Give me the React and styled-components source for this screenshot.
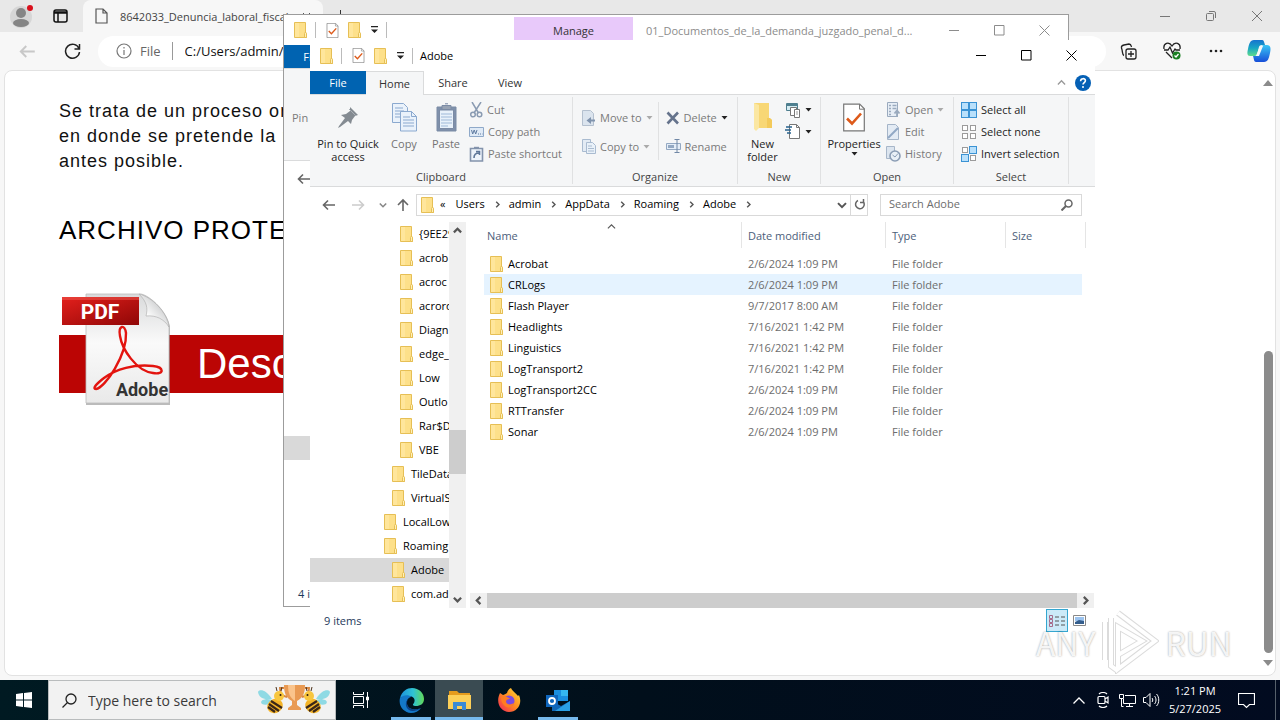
import React from "react";
import styled, { createGlobalStyle, css } from "styled-components";

const GlobalStyle = createGlobalStyle`
  * {
    box-sizing: border-box;
  }
  body {
    margin: 0;
    font-family: "Open Sans", "Noto Sans", sans-serif;
    font-size: 11px;
    color: #1e1e1e;
  }
  button, input {
    font: inherit;
    color: inherit;
    margin: 0;
    padding: 0;
    border: 0;
    background: none;
  }
  svg {
    display: block;
    flex: none;
  }
`;

const Desktop = styled.div`
  position: relative;
  display: flex;
  flex-direction: column;
  height: 100vh;
  min-height: 600px;
  overflow: hidden;
  background: #f7f7f7;
`;

/* ---------- browser ---------- */

const Browser = styled.main`
  flex: 1;
  display: flex;
  flex-direction: column;
  min-height: 0;
`;

const TabStrip = styled.div`
  display: flex;
  align-items: stretch;
  height: 32px;
  background: #e8e8e8;
`;

const StripButton = styled.button`
  width: ${(p) => p.$width || 46}px;
  display: flex;
  align-items: center;
  justify-content: center;
`;

const BrowserTab = styled.div`
  display: flex;
  align-items: center;
  gap: 12px;
  width: 240px;
  margin-left: 6px;
  padding: 0 12px;
  border-radius: 8px 8px 0 0;
  background: #f7f7f7;
  color: #444;
`;

const TabTitle = styled.span`
  flex: 1;
  overflow: hidden;
  white-space: nowrap;
`;

const Spacer = styled.div`
  flex: 1;
`;

const Toolbar = styled.div`
  display: flex;
  align-items: center;
  height: 38px;
  padding-left: 4px;
`;

const UrlBar = styled.label`
  flex: 1;
  display: flex;
  align-items: center;
  height: 31px;
  margin-left: 4px;
  padding-left: 18px;
  border-radius: 16px;
  background: #fff;
  color: #666;
  font-size: 13px;

  input {
    flex: 1;
    margin-left: 11px;
    padding-left: 12px;
    border-left: 1px solid #999;
    color: #111;
    outline: none;
  }
  svg {
    margin-right: 8px;
  }
`;

const Page = styled.section`
  flex: 1;
  display: flex;
  min-height: 0;
  margin: 0 4px 4px;
  border: 1px solid #e2e2e2;
  border-radius: 8px;
  background: #fff;
`;

const PageBody = styled.article`
  flex: 1;
  padding: 28px 0 0 54px;
  overflow: hidden;
  font-family: "Liberation Sans", Arial, sans-serif;
  color: #111;

  p {
    margin: 0;
    font-size: 18px;
    line-height: 25px;
    letter-spacing: 1px;
  }
  h2 {
    margin: 41px 0 90px;
    font-size: 26px;
    font-weight: 400;
    line-height: 30px;
    letter-spacing: 1px;
    color: #000;
  }
`;

const Banner = styled.a`
  position: relative;
  display: block;
  width: 440px;
  padding-left: 138px;
  background: #bb0504;
  color: #fff;
  font-size: 42px;
  line-height: 58px;
  text-decoration: none;

  svg {
    position: absolute;
    left: 0;
    bottom: -15px;
  }
`;

const PageScroll = styled.div`
  display: flex;
  flex-direction: column;
  align-items: center;
  width: 14px;
  padding: 9px 0;
`;

const PageThumb = styled.div`
  flex: 301;
  width: 9px;
  margin-bottom: 7px;
  border-radius: 5px;
  background: #8b8b8b;
`;

const ThumbGap = styled.div`
  flex: 264;
`;

/* ---------- file explorer ---------- */

const Window = styled.section`
  position: absolute;
  display: flex;
  flex-direction: column;
  background: #fff;
  overflow: hidden;

  ${(p) =>
    p.$active
      ? css`
          inset: 40px 185px 87px 310px;
        `
      : css`
          inset: 14px 211px 113px 283px;
          border: 1px solid #9c9c9c;
        `}
`;

const TitleBar = styled.header`
  display: flex;
  align-items: center;
  height: ${(p) => (p.$active ? 31 : 30)}px;
  padding: 0 1px 0 10px;
  color: ${(p) => (p.$active ? "#000" : "#8c8c8c")};
`;

const QuickAccess = styled.div`
  display: flex;
  align-items: center;
  height: 16px;
  margin-right: 7px;
  padding-right: 7px;
  border-right: 1px solid #bbb;

  button + button {
    margin-left: 9px;
  }
`;

const QuickIcon = styled.div`
  margin-right: 10px;
  padding-right: 8px;
  border-right: 1px solid #bbb;
`;

const ContextTab = styled.div`
  align-self: flex-end;
  width: 119px;
  margin: 0 13px 4px 120px;
  padding-top: 4px;
  background: #e8c9fa;
  color: #333;
  line-height: 20px;
  text-align: center;
`;

const CaptionButton = styled.button`
  display: flex;
  align-items: center;
  justify-content: center;
  width: 45px;
  height: 30px;
  color: ${(p) => (p.$active ? "#000" : "#8c8c8c")};
`;

const RibbonTabs = styled.nav`
  display: flex;
  align-items: flex-end;
  height: 24px;
  border-bottom: 1px solid #dadbdc;
`;

const RibbonTab = styled.button`
  width: ${(p) => p.$width || 56}px;
  height: 23px;
  text-align: center;
  color: #333;

  ${(p) =>
    p.$file &&
    css`
      background: #0063b1;
      color: #fff;
    `}
  ${(p) =>
    p.$current &&
    css`
      height: 24px;
      margin-bottom: -1px;
      border: 1px solid #dadbdc;
      border-bottom: 0;
      border-left: 0;
      background: #f5f6f7;
    `}
`;

const HelpBox = styled.div`
  display: flex;
  align-items: center;
  gap: 9px;
  height: 23px;
  margin-left: auto;
  padding-right: 4px;
`;

const Ribbon = styled.div`
  display: flex;
  height: 92px;
  flex: none;
  border-bottom: 1px solid #dadbdc;
  background: #f5f6f7;
`;

const Group = styled.div`
  display: flex;
  flex-direction: column;
  flex: none;
  width: ${(p) => p.$width}px;
  margin: 2px 0;
  border-right: 1px solid #e0e1e2;
`;

const GroupBody = styled.div`
  flex: 1;
  display: flex;
  align-items: flex-start;
  padding: 2px 0 0 ${(p) => p.$left || 0}px;
`;

const GroupLabel = styled.div`
  line-height: 15px;
  text-align: center;
  color: #444;
`;

const BigButton = styled.button`
  display: flex;
  flex-direction: column;
  align-items: center;
  gap: 2px;
  width: ${(p) => p.$width}px;
  line-height: 13px;
  white-space: pre-line;
  color: ${(p) => (p.$off ? "#737373" : "#1e1e1e")};
`;

const IconSlot = styled.span`
  display: flex;
  align-items: center;
  justify-content: center;
  height: 36px;
`;

const Stack = styled.div`
  display: flex;
  flex-direction: column;
  gap: ${(p) => p.$gap || 0}px;
  padding: ${(p) => p.$top || 0}px 8px 0 0;
`;

const SmallButton = styled.button`
  display: flex;
  align-items: center;
  gap: 4px;
  height: 22px;
  padding-bottom: 1px;
  white-space: nowrap;
  color: ${(p) => (p.$off ? "#7a7a7a" : "#1e1e1e")};
`;

const InnerLine = styled.div`
  width: 1px;
  height: 58px;
  margin: 3px 7px 0 -3px;
  background: #e0e1e2;
`;

const AddressRow = styled.div`
  display: flex;
  align-items: center;
  height: 35px;
  padding: 0 13px 0 8px;
`;

const NavButton = styled.button`
  display: flex;
  align-items: center;
  justify-content: center;
  width: ${(p) => p.$width || 24}px;
  height: 22px;
`;

const AddressBox = styled.div`
  flex: 1;
  display: flex;
  align-items: center;
  height: 22px;
  margin-right: 12px;
  padding-left: 4px;
  border: 1px solid #d9d9d9;
  color: #000;
`;

const Crumb = styled.button`
  margin-left: ${(p) => p.$gap || 9}px;
  margin-right: 9px;
  line-height: 18px;
  padding-bottom: 2px;
`;

const RefreshButton = styled.button`
  display: flex;
  align-items: center;
  justify-content: center;
  align-self: stretch;
  width: 17px;
  margin-left: 3px;
  border-left: 1px solid #d9d9d9;
`;

const SearchBox = styled.label`
  display: flex;
  align-items: center;
  width: 202px;
  height: 22px;
  padding: 0 8px;
  border: 1px solid #d9d9d9;

  input {
    flex: 1;
    min-width: 0;
    padding-bottom: 2px;
    outline: none;
  }
  input::placeholder {
    color: #6d6d6d;
    opacity: 1;
  }
`;

const Panes = styled.div`
  flex: 1;
  display: flex;
  min-height: 0;
`;

const Tree = styled.ul`
  width: 139px;
  margin: 0;
  padding: 0;
  overflow: hidden;
  list-style: none;
  color: #000;
`;

const TreeItem = styled.li`
  display: flex;
  align-items: center;
  gap: 6px;
  height: 24px;
  padding-left: ${(p) => 66 + p.$level * 8}px;
  padding-bottom: 1px;
  white-space: nowrap;
  background: ${(p) => (p.$selected ? "#d9d9d9" : "transparent")};
`;

const VScroll = styled.div`
  display: flex;
  flex-direction: column;
  width: 17px;
  margin-right: 4px;
  background: #f0f0f0;
`;

const HScroll = styled.div`
  display: flex;
  height: 15px;
  margin-right: 1px;
  background: #f0f0f0;
`;

const ScrollButton = styled.button`
  display: flex;
  align-items: center;
  justify-content: center;
  flex: none;
  width: 17px;
  height: ${(p) => p.$height || 17}px;
`;

const Thumb = styled.div`
  flex: ${(p) => p.$flex};
  background: ${(p) => (p.$empty ? "transparent" : "#cdcdcd")};
`;

const ListPane = styled.div`
  flex: 1;
  display: flex;
  flex-direction: column;
  min-width: 0;
`;

const ListBody = styled.div`
  flex: 1;
  padding-left: 14px;
  overflow: hidden;
`;

const FileTable = styled.table`
  width: 602px;
  table-layout: fixed;
  border-collapse: separate;
  border-spacing: 0;
  color: #6d6d6d;

  th {
    height: 26px;
    padding: 0 0 0 6px;
    border-right: 1px solid #e5e5e5;
    font-weight: 400;
    text-align: left;
    color: #4c607a;
  }
  th:first-child {
    padding-left: 3px;
  }
  th > div {
    display: flex;
    align-items: center;
    justify-content: space-between;
    padding-right: 125px;
  }
  th svg {
    margin-bottom: 17px;
  }
  td {
    height: 21px;
    padding: 0 0 0 6px;
    line-height: 16px;
  }
  td:last-child {
    border-right: 4px solid transparent;
    background-clip: padding-box;
  }
  tbody::before {
    content: "";
    display: block;
    height: 5px;
  }
`;

const FileRow = styled.tr`
  td {
    background-color: ${(p) => (p.$hover ? "#e5f3ff" : "transparent")};
  }
`;

const FileName = styled.div`
  display: flex;
  align-items: center;
  gap: 5px;
  color: #000;
`;

const StatusBar = styled.footer`
  display: flex;
  align-items: center;
  height: 25px;
  padding: 0 5px 0 14px;
  color: #1e395b;
`;

const ViewButton = styled.button`
  display: flex;
  align-items: center;
  justify-content: center;
  width: 22px;
  height: 23px;

  ${(p) =>
    p.$on &&
    css`
      border: 1px solid #35a6d0;
      background: #cbeaf8;
    `}
`;

/* only the left edge of the back window stays visible */
const BackRibbon = styled.div`
  height: 92px;
  padding: 41px 0 0 8px;
  border-bottom: 1px solid #dadbdc;
  background: #f5f6f7;
  color: #7a7a7a;
  line-height: 16px;
`;

const BackTree = styled.div`
  flex: 1;
  display: flex;
  flex-direction: column;
  padding-top: 240px;
`;

const BackSelected = styled.div`
  width: 139px;
  height: 24px;
  background: #d9d9d9;
`;

/* ---------- watermark ---------- */

const Watermark = styled.div`
  position: absolute;
  right: 48px;
  bottom: 46px;
  display: flex;
  align-items: center;
  gap: 6px;
  color: rgba(255, 255, 255, 0.9);
  font-family: "Noto Sans CJK SC", sans-serif;
  font-size: 32px;
  line-height: 64px;
  text-shadow: 0 0 2px rgba(0, 0, 0, 0.4);
  pointer-events: none;
`;

/* ---------- taskbar ---------- */

const Taskbar = styled.footer`
  display: flex;
  align-items: stretch;
  height: 40px;
  flex: none;
  background: linear-gradient(90deg, #001a22, #010f1b 50%, #020b20);
  color: #fff;
`;

const TaskButton = styled.button`
  display: flex;
  align-items: center;
  justify-content: center;
  width: ${(p) => p.$width || 49}px;
  background: ${(p) => (p.$active ? "#3a4b52" : "none")};

  ${(p) =>
    p.$running &&
    css`
      margin: 0 ${p.$active ? 0 : 4}px;
      width: ${p.$active ? 48 : 40}px;
      padding-top: 3px;
      border-bottom: 3px solid #76b9ed;
    `}
`;

const TaskSearch = styled.label`
  display: flex;
  align-items: center;
  gap: 11px;
  width: 288px;
  padding: 0 4px 0 13px;
  border: 1px solid #b9bcbd;
  background: #f2f2f2;

  input {
    flex: 1;
    min-width: 0;
    color: #333;
    font-size: 14px;
    outline: none;
  }
  input::placeholder {
    color: #3a3a3a;
    opacity: 1;
  }
`;

const Tray = styled.div`
  display: flex;
  align-items: center;
  margin-left: auto;
`;

const TrayButton = styled.button`
  display: flex;
  align-items: center;
  justify-content: center;
  width: ${(p) => p.$width || 24}px;
  height: 40px;
`;

const Clock = styled.time`
  width: 64px;
  line-height: 18px;
  text-align: center;
`;

const ShowDesktop = styled.button`
  width: 5px;
  height: 40px;
  margin-left: 10px;
  border-left: 1px solid #56606b;
`;

/* ---------- icons ---------- */

const Stroke = ({ w = 16, h = w, d, color = "currentColor", sw = 1, box, children }) => (
  <svg
    width={w}
    height={h}
    viewBox={box || `0 0 ${w} ${h}`}
    fill="none"
    stroke={color}
    strokeWidth={sw}
    aria-hidden="true"
  >
    {d && <path d={d} />}
    {children}
  </svg>
);

const FolderIcon = ({ w = 13, h = 16 }) => (
  <svg width={w} height={h} viewBox="0 0 13 16" aria-hidden="true">
    <path d="M.5.5h11v10l1 1v4H.5z" fill="#fde08a" stroke="#e6bf55" />
    <path d="M1 1h4v14H1z" fill="#ffe69c" />
    <path d="M10.5 15.5v-4l1-1.5 1 1.5v4z" fill="#fff0b8" stroke="#e6bf55" />
  </svg>
);

const BigFolderIcon = () => (
  <svg width="20" height="30" viewBox="0 0 20 30" aria-hidden="true">
    <path d="M1 1h15v15l3 2v8H3l-2 1z" fill="#f8d775" />
    <path d="M1 1l5 2v23l-3 3-2-2z" fill="#fbe7a2" />
    <path d="M14 16h3l2 2v8h-5z" fill="#f3ca5b" />
  </svg>
);

const CheckPageIcon = ({ w = 13, h = 15 }) => (
  <svg width={w} height={h} viewBox="0 0 22 28" fill="none" aria-hidden="true">
    <path d="M.7.7h16l4.6 4.6v22H.7z" fill="#fff" stroke="#777" strokeWidth="1.2" />
    <path d="M16.5.7v5h5" stroke="#777" />
    <path d="M4 15l5 5 9-10" stroke="#dd5a1a" strokeWidth="2.6" />
  </svg>
);

const Arrow = ({ color = "#222" }) => (
  <svg width="7" height="4" viewBox="0 0 7 4" aria-hidden="true">
    <path d="M.5 0h6l-3 3.6z" fill={color} />
  </svg>
);

const CustomizeIcon = () => (
  <svg width="9" height="8" viewBox="0 0 9 8" aria-hidden="true">
    <path d="M1 0h7v1.300H1zM1 3.500h7L4.500 7z" fill="#222" />
  </svg>
);

const PinIcon = () => (
  <svg width="24" height="24" viewBox="0 0 24 24" aria-hidden="true">
    <path
      d="M14 2l8 8-3 1-3 4-1 4-3-3-8 6-2 1 1-2 6-8-4-3 5-1 4-3z"
      fill="#848b92"
    />
    <path d="M13 4l7 7" stroke="#a9afb5" />
  </svg>
);

const CopyIcon = () => (
  <Stroke w={25} h={29} color="#8ba9cf">
    <path d="M.5.5h11l4 4v15H.500z" fill="#eaf2fb" />
    <path d="M3 5h8M3 8h9M3 11h9M3 14h9" />
    <path d="M8.500 8.500h11l5 5v14.500h-16z" fill="#eaf2fb" />
    <path d="M19.500 8.500v5h5M11 14h7M11 17h11M11 20h11M11 23h11" />
  </Stroke>
);

const PasteIcon = () => (
  <Stroke w={21} h={29} color="#7b8ba5">
    <path d="M1 4h19v24H1z" fill="#7f90ab" />
    <path d="M3.500 7h14v18.500h-14z" fill="#e8f1fa" />
    <path d="M6 2.500h9v4H6z" fill="#98a3b4" />
    <path d="M9 .8h3" />
    <path d="M5 11h11M5 14h11M5 17h11M5 20h11M5 23h7" stroke="#9fb9d8" />
  </Stroke>
);

const CutIcon = () => (
  <Stroke w={14} h={16} color="#8a9bb2" sw={1.5}>
    <path d="M3 0l6.500 11M12 0L5 11" />
    <circle cx="4" cy="12.500" r="2.300" />
    <circle cx="10.500" cy="12.500" r="2.300" />
  </Stroke>
);

const PathIcon = () => (
  <Stroke w={15} h={12} color="#8fa9c9">
    <path d="M.5 1.500h14v9H.500z" fill="#dfeaf6" />
    <path d="M2.500 4l1.200 4 1.500-4 1.500 4L8 4M9 8h1M11 8h1M13 8h.5" stroke="#5f7ba1" />
  </Stroke>
);

const ShortcutIcon = () => (
  <Stroke w={15} h={16} color="#8393ac" sw={1.600}>
    <path d="M1.500 2.500h12v12.500h-12z" fill="#eef4fb" />
    <path d="M5 1.800h5" strokeWidth="2" />
    <path d="M5 12c0-4 2-5 5-5M7 5.500h3.500V9" stroke="#5f7799" />
  </Stroke>
);

const MoveIcon = () => (
  <Stroke w={14} h={16} color="#b4c0cf">
    <path d="M.5.5h8l3 3v12H.500z" fill="#dbe4ee" />
    <path d="M13 10.500H7" stroke="#8094ae" strokeWidth="2" />
    <path d="M4.500 10.500L9 7v7z" fill="#8094ae" stroke="none" />
  </Stroke>
);

const CopyToIcon = () => (
  <Stroke w={14} h={16} color="#a9bbd0">
    <path d="M.5.500h8v12h-8z" fill="#e3ebf4" />
    <path d="M4.500 3.500h6l3 3v8h-9z" fill="#e9f1f9" />
    <path d="M6 7h4M6 9.500h6M6 12h6" />
  </Stroke>
);

const DeleteIcon = () => (
  <Stroke w={14} h={14} color="#65738c" sw={2.600} d="M1.500 1.500L12 12.500M12 1.500L1.500 12.500" />
);

const RenameIcon = () => (
  <Stroke w={15} h={15} color="#93a8c2">
    <path d="M.5 4.500h14v6H.500z" fill="#e4edf7" />
    <path d="M2 7.500h6" strokeWidth="3" />
    <path d="M8.500.500h5M11 .5v13M8.500 13.500h5" stroke="#7188a6" />
  </Stroke>
);

const NewItemIcon = () => (
  <Stroke w={16} h={16} color="#4e7f8f">
    <path d="M1.500 1.500h11v7h-11z" fill="#d5ecf2" />
    <path d="M2 3h10" strokeWidth="2" />
    <path d="M5.500 5.500h6v8h-6z" fill="#fff" stroke="#777" />
    <path d="M9.500 7.500h5v8h-5z" fill="#fff" stroke="#777" />
    <path d="M11 10h2M11 12h2" stroke="#999" />
  </Stroke>
);

const EasyAccessIcon = () => (
  <Stroke w={16} h={16} color="#777">
    <path d="M4.500.500h7l3 3v11h-10z" fill="#fff" />
    <path d="M11.500.500v3h3" />
    <path d="M1 3h6M0 6h6M2 9h4" stroke="#27638f" strokeWidth="1.400" />
  </Stroke>
);

const OpenIcon = () => (
  <Stroke w={15} h={16} color="#9aaabe">
    <path d="M1.500.500h10v14h-10z" fill="#e7eef6" />
    <path d="M3 3.500h2M3 6.500h2M3 9.500h2M3 12.500h2M6.500 3.500h4M6.500 6.500h4" strokeWidth="1.500" />
    <path d="M11 15V9M8.500 11.500L11 8.500l2.500 3" strokeWidth="1.800" />
  </Stroke>
);

const EditIcon = () => (
  <Stroke w={15} h={16} color="#a4b4c8">
    <path d="M1.500.500h8l3 3v12h-11z" fill="#e3ebf4" />
    <path d="M2 14L12 4" stroke="#91a8c4" strokeWidth="2" />
  </Stroke>
);

const HistoryIcon = () => (
  <Stroke w={15} h={16} color="#a7b6c9">
    <path d="M.5.500h8v12h-8z" fill="#dce5ef" />
    <circle cx="9" cy="10" r="5" fill="#e9f0f7" stroke="#8b9db5" strokeWidth="1.600" />
    <path d="M6.500 9l2.500 2 3-3.500" stroke="#8b9db5" />
  </Stroke>
);

const SquaresIcon = ({ on = [] }) => (
  <svg width="16" height="16" viewBox="0 0 16 16" aria-hidden="true">
    {[0, 1, 2, 3].map((i) => {
      const lit = on.includes(i);
      return (
        <rect
          key={i}
          x={(i % 2) * 8 + (lit ? 0.5 : 1.5)}
          y={Math.floor(i / 2) * 8 + (lit ? 0.5 : 1.5)}
          width={lit ? 7 : 5}
          height={lit ? 7 : 5}
          fill={lit ? "#b9e0fb" : "#fff"}
          stroke={lit ? "#3b93d4" : "#9b9b9b"}
        />
      );
    })}
  </svg>
);

const HelpIcon = () => (
  <svg width="16" height="16" viewBox="0 0 16 16" aria-hidden="true">
    <circle cx="8" cy="8" r="8" fill="#0560b5" />
    <path
      d="M5.600 6.200c0-3.400 5-3.200 4.800-.4C10.300 7.500 8 7.600 8 9.600"
      fill="none"
      stroke="#fff"
      strokeWidth="1.600"
    />
    <circle cx="8" cy="12" r="1" fill="#fff" />
  </svg>
);

const PdfPicture = () => (
  <svg width="114" height="116" viewBox="0 0 114 116" role="img" aria-label="PDF">
    <defs>
      <linearGradient id="sheet" x1="0" y1="0" x2="0" y2="1">
        <stop offset="0" stopColor="#d9dadb" />
        <stop offset=".45" stopColor="#fafafa" />
        <stop offset="1" stopColor="#e9e9e9" />
      </linearGradient>
      <linearGradient id="plate" x1="0" y1="0" x2="1" y2="1">
        <stop offset="0" stopColor="#e3201c" />
        <stop offset="1" stopColor="#8f0606" />
      </linearGradient>
      <linearGradient id="fold" x1="0" y1="1" x2="1" y2="0">
        <stop offset=".3" stopColor="#fff" />
        <stop offset="1" stopColor="#a9abad" />
      </linearGradient>
    </defs>
    <path d="M27 3h55c12 3 28 20 29 33v77H27z" fill="#777" opacity=".5" />
    <path d="M27 2h55c10 2 27 19 28 32v77H27z" fill="url(#sheet)" stroke="#bbb" strokeWidth=".8" />
    <path d="M80 2c8 8 9 14 7 22 10-1 18 3 23 11C108 20 93 5 80 2z" fill="url(#fold)" stroke="#aaa" strokeWidth=".6" />
    <path d="M3 5h77v28H3z" fill="url(#plate)" />
    <path d="M3 5h77v3H3z" fill="#f05a50" opacity=".5" />
    <text
      x="41"
      y="27"
      textAnchor="middle"
      fontFamily="Roboto, sans-serif"
      fontWeight="700"
      fontSize="21"
      fill="#fff"
    >
      PDF
    </text>
    <path
      d="M37 97c9-1 31-34 30-56-1-9-8-8-6 3 2 13 16 35 33 37 12 2 11-6 0-7-19-2-37 3-49 12-8 6-12 11-8 11z"
      fill="none"
      stroke="#e3140f"
      strokeWidth="2.400"
    />
    <text
      x="83"
      y="104"
      textAnchor="middle"
      fontFamily="Roboto, sans-serif"
      fontWeight="700"
      fontSize="18"
      fill="#333"
    >
      Adobe
    </text>
  </svg>
);

const ProfileIcon = () => (
  <svg width="24" height="26" viewBox="0 0 24 26" aria-hidden="true">
    <circle cx="11" cy="14" r="11" fill="#d6d6d6" />
    <circle cx="11" cy="10" r="5" fill="#858585" />
    <ellipse cx="11" cy="20" rx="8" ry="4" fill="#858585" />
    <circle cx="20" cy="5" r="3" fill="#d9101c" />
  </svg>
);

const CopilotIcon = () => (
  <svg width="24" height="24" viewBox="0 0 24 24" aria-hidden="true">
    <defs>
      <linearGradient id="copA" x1="0" y1="0" x2="0" y2="1">
        <stop offset="0" stopColor="#1673cf" />
        <stop offset=".5" stopColor="#17a5c4" />
        <stop offset="1" stopColor="#5fdc8c" />
      </linearGradient>
      <linearGradient id="copB" x1="0" y1="0" x2="0" y2="1">
        <stop offset="0" stopColor="#39c6f5" />
        <stop offset="1" stopColor="#174ed8" />
      </linearGradient>
    </defs>
    <path d="M7 1h8c2 0 2 2 3 5h-3c-3 0-3 2-4 6-1 3-1 5-4 5H3c-3 0-3-3-2-7C2 5 3 1 7 1z" fill="url(#copA)" />
    <path d="M18 6h2c4 0 4 4 3 8-1 5-2 9-6 9H9c-2 0-2-3-3-6h2c3 0 3-2 4-5 1-4 2-6 6-6z" fill="url(#copB)" />
    <path d="M13 7h3l-4 10H9z" fill="#f7f7f7" />
  </svg>
);

const BeesPicture = () => (
  <svg width="74" height="32" viewBox="0 0 74 32" aria-hidden="true">
    <path d="M27 1h21c0 8-2 13-8 16v4l4 3v2H31v-2l4-3v-4c-6-3-8-8-8-16z" fill="#e99a53" />
    <path d="M31 1h7v16c-5-3-7-8-7-16z" fill="#fac48c" />
    <path d="M27 4h-4c0 6 2 8 7 9M48 4h4c0 6-2 8-7 9" fill="none" stroke="#d88742" strokeWidth="2" />
    {[0, 1].map((i) => (
      <g key={i} transform={i ? "matrix(-1 0 0 1 74 0)" : undefined}>
        <path d="M15 15C9 5 2 5 1 8c1 6 6 8 14 7zM15 16C7 14 2 17 5 20c4 2 8 0 10-4z" fill="#8fdae4" />
        <ellipse cx="18" cy="22" rx="8" ry="7" fill="#f4b429" transform="rotate(-30 18 22)" />
        <path d="M11 23l7 5M12 20l10 7M14 17l11 7" stroke="#3a2618" strokeWidth="2.200" />
        <circle cx="22" cy="12" r="5" fill="#f8c63f" />
        <path d="M20 7l-1-4M24 7l1-4" stroke="#4a3018" />
        <circle cx="23.500" cy="11" r="1" fill="#2b1a10" />
      </g>
    ))}
  </svg>
);

const EdgeIcon = () => (
  <svg width="25" height="25" viewBox="0 0 25 25" aria-hidden="true">
    <defs>
      <linearGradient id="edgeTop" x1="0" y1="0" x2="1" y2="0">
        <stop offset="0" stopColor="#1c91dc" />
        <stop offset=".55" stopColor="#2fc3d5" />
        <stop offset="1" stopColor="#62d957" />
      </linearGradient>
    </defs>
    <path d="M1 10C3 3 8 0 13 0c7 0 12 5 12 11 0 5-4 7-8 7-3 0-4-1-2-3 2-4-1-7-5-7-4 0-7 1-9 2z" fill="url(#edgeTop)" />
    <path d="M1 10c3-3 8-4 12-1-4 0-6 4-5 7 1 5 7 7 14 4-2 3-6 5-10 5C5 25-1 18 1 10z" fill="#1478c8" />
    <path d="M9 11c-3 3-3 8 1 11 3 2 8 1 12-2-7 3-13 1-14-4 0-2 0-3 1-5z" fill="#0c3f85" />
  </svg>
);

const ExplorerIcon = () => (
  <svg width="23" height="20" viewBox="0 0 23 20" aria-hidden="true">
    <path d="M1 1h8l2 2h11v5H1z" fill="#e59b1d" />
    <path d="M0 5h23v14H0z" fill="#fccf58" />
    <path d="M5 20v-8h13v8h-4v-4H9v4z" fill="#3b8ad4" />
  </svg>
);

const FirefoxIcon = () => (
  <svg width="24" height="24" viewBox="0 0 24 24" aria-hidden="true">
    <defs>
      <linearGradient id="fox" x1="1" y1="0" x2="0" y2="1">
        <stop offset="0" stopColor="#ffe03a" />
        <stop offset=".5" stopColor="#ff8a1f" />
        <stop offset="1" stopColor="#f0205e" />
      </linearGradient>
    </defs>
    <path d="M3 5l3 2c2-1 3-1 4-2 1-3 2-4 4-5 1 3 5 5 7 8l1-1c4 9-2 17-10 17S-2 15 3 5z" fill="url(#fox)" />
    <circle cx="12" cy="13" r="5.500" fill="#7a4be0" />
    <path d="M4 9c4-2 7 0 9 2-3 0-4 1-4 3 1 3 5 3 8 1-1 4-6 6-9 3-3-2-4-5-4-9z" fill="#ff7c22" />
  </svg>
);

const OutlookIcon = () => (
  <svg width="24" height="23" viewBox="0 0 24 23" aria-hidden="true">
    <path d="M8 1h14v11H8z" fill="#1a8fe0" />
    <path d="M15 1h7v6h-7z" fill="#35b8f1" />
    <path d="M6 12l9 5 9-5v10H6z" fill="#1065b5" />
    <path d="M24 12v10H9z" fill="#2a9fe5" />
    <path d="M0 6h12v12H0z" fill="#0f66bd" />
    <circle cx="6" cy="12" r="3" fill="none" stroke="#fff" strokeWidth="1.800" />
  </svg>
);

/* ---------- data ---------- */

const tree = [
  ["{9EE29", 3],
  ["acrob", 3],
  ["acroc", 3],
  ["acrord", 3],
  ["Diagn", 3],
  ["edge_", 3],
  ["Low", 3],
  ["Outlo", 3],
  ["Rar$D", 3],
  ["VBE", 3],
  ["TileData", 2],
  ["VirtualS", 2],
  ["LocalLow", 1],
  ["Roaming", 1],
  ["Adobe", 2],
  ["com.ad", 2],
];

const files = [
  ["Acrobat", "2/6/2024 1:09 PM"],
  ["CRLogs", "2/6/2024 1:09 PM"],
  ["Flash Player", "9/7/2017 8:00 AM"],
  ["Headlights", "7/16/2021 1:42 PM"],
  ["Linguistics", "7/16/2021 1:42 PM"],
  ["LogTransport2", "7/16/2021 1:42 PM"],
  ["LogTransport2CC", "2/6/2024 1:09 PM"],
  ["RTTransfer", "2/6/2024 1:09 PM"],
  ["Sonar", "2/6/2024 1:09 PM"],
];

const crumbs = ["Users", "admin", "AppData", "Roaming", "Adobe"];

/* ---------- parts ---------- */

function WindowTitle({ active, title, context }) {
  return (
    <TitleBar $active={active}>
      <QuickIcon>
        <FolderIcon />
      </QuickIcon>
      <QuickAccess>
        <button aria-label="Properties">
          <CheckPageIcon />
        </button>
        <button aria-label="New folder">
          <FolderIcon />
        </button>
        <button aria-label="Customize">
          <CustomizeIcon />
        </button>
      </QuickAccess>
      {context && <ContextTab>{context}</ContextTab>}
      <span>{title}</span>
      <Spacer />
      <CaptionButton $active={active} aria-label="Minimize">
        <Stroke w={11} d="M0 5.500h10" />
      </CaptionButton>
      <CaptionButton $active={active} aria-label="Maximize">
        <Stroke w={11} d="M.5.500h9.500v9.500H.500z" />
      </CaptionButton>
      <CaptionButton $active={active} aria-label="Close">
        <Stroke w={11} d="M.5.500l10 10M10.500.500l-10 10" />
      </CaptionButton>
    </TitleBar>
  );
}

function Chevron({ dir = "down", w = 8, sw = 1.6, color = "#555" }) {
  const paths = {
    down: "M.8 2.500L4 5.700l3.200-3.200",
    up: "M.8 5.700L4 2.500l3.200 3.200",
    left: "M5.700.8L2.500 4l3.200 3.200",
    right: "M2.500.8L5.700 4 2.500 7.200",
  };
  return <Stroke w={w} box="0 0 8 8" d={paths[dir]} sw={sw} color={color} />;
}

function BackArrow({ flip, up, color = "#666", size = 14 }) {
  const d = up
    ? "M7 13V2M2 7l5-5 5 5"
    : flip
    ? "M1 7h11M8 2.500L12.500 7 8 11.500"
    : "M13 7H2M6 2.500L1.500 7 6 11.500";
  return <Stroke w={size} box="0 0 14 14" d={d} color={color} sw={1.6} />;
}

function BackWindow() {
  return (
    <Window>
      <WindowTitle context="Manage" title="01_Documentos_de_la_demanda_juzgado_penal_d..." />
      <RibbonTabs>
        <RibbonTab $file>File</RibbonTab>
      </RibbonTabs>
      <BackRibbon>Pin to Quick</BackRibbon>
      <AddressRow>
        <NavButton aria-label="Back">
          <BackArrow />
        </NavButton>
      </AddressRow>
      <BackTree>
        <BackSelected />
      </BackTree>
      <StatusBar>4 items</StatusBar>
    </Window>
  );
}

function HomeRibbon() {
  return (
    <Ribbon>
      <Group $width={263}>
        <GroupBody $left={1}>
          <BigButton $width={74}>
            <IconSlot>
              <PinIcon />
            </IconSlot>
            {"Pin to Quick\naccess"}
          </BigButton>
          <BigButton $width={38} $off>
            <IconSlot>
              <CopyIcon />
            </IconSlot>
            Copy
          </BigButton>
          <BigButton $width={46} $off>
            <IconSlot>
              <PasteIcon />
            </IconSlot>
            Paste
          </BigButton>
          <Stack>
            <SmallButton $off>
              <CutIcon /> Cut
            </SmallButton>
            <SmallButton $off>
              <PathIcon /> Copy path
            </SmallButton>
            <SmallButton $off>
              <ShortcutIcon /> Paste shortcut
            </SmallButton>
          </Stack>
        </GroupBody>
        <GroupLabel>Clipboard</GroupLabel>
      </Group>
      <Group $width={165}>
        <GroupBody $left={9}>
          <Stack $gap={7} $top={8}>
            <SmallButton $off>
              <MoveIcon /> Move to <Arrow color="#aaa" />
            </SmallButton>
            <SmallButton $off>
              <CopyToIcon /> Copy to <Arrow color="#aaa" />
            </SmallButton>
          </Stack>
          <InnerLine />
          <Stack $gap={7} $top={8}>
            <SmallButton $off>
              <DeleteIcon /> Delete <Arrow />
            </SmallButton>
            <SmallButton $off>
              <RenameIcon /> Rename
            </SmallButton>
          </Stack>
        </GroupBody>
        <GroupLabel>Organize</GroupLabel>
      </Group>
      <Group $width={83}>
        <GroupBody $left={2}>
          <BigButton $width={46}>
            <IconSlot>
              <BigFolderIcon />
            </IconSlot>
            {"New\nfolder"}
          </BigButton>
          <Stack>
            <SmallButton aria-label="New item">
              <NewItemIcon />
              <Arrow />
            </SmallButton>
            <SmallButton aria-label="Easy access">
              <EasyAccessIcon />
              <Arrow />
            </SmallButton>
          </Stack>
        </GroupBody>
        <GroupLabel>New</GroupLabel>
      </Group>
      <Group $width={133}>
        <GroupBody $left={1}>
          <BigButton $width={64}>
            <IconSlot>
              <CheckPageIcon w={22} h={29} />
            </IconSlot>
            Properties
            <Arrow />
          </BigButton>
          <Stack>
            <SmallButton $off>
              <OpenIcon /> Open <Arrow color="#aaa" />
            </SmallButton>
            <SmallButton $off>
              <EditIcon /> Edit
            </SmallButton>
            <SmallButton $off>
              <HistoryIcon /> History
            </SmallButton>
          </Stack>
        </GroupBody>
        <GroupLabel>Open</GroupLabel>
      </Group>
      <Group $width={115}>
        <GroupBody $left={7}>
          <Stack>
            <SmallButton>
              <SquaresIcon on={[0, 1, 2, 3]} /> Select all
            </SmallButton>
            <SmallButton>
              <SquaresIcon /> Select none
            </SmallButton>
            <SmallButton>
              <SquaresIcon on={[1, 2]} /> Invert selection
            </SmallButton>
          </Stack>
        </GroupBody>
        <GroupLabel>Select</GroupLabel>
      </Group>
    </Ribbon>
  );
}

function FrontWindow() {
  return (
    <Window $active>
      <WindowTitle active title="Adobe" />
      <RibbonTabs>
        <RibbonTab $file>File</RibbonTab>
        <RibbonTab $current $width={58}>
          Home
        </RibbonTab>
        <RibbonTab $width={58}>Share</RibbonTab>
        <RibbonTab>View</RibbonTab>
        <HelpBox>
          <Chevron dir="up" w={9} sw={1.2} color="#999" />
          <HelpIcon />
        </HelpBox>
      </RibbonTabs>
      <HomeRibbon />
      <AddressRow>
        <NavButton $width={22} aria-label="Back">
          <BackArrow />
        </NavButton>
        <NavButton $width={36} aria-label="Forward">
          <BackArrow flip color="#ccc" />
        </NavButton>
        <NavButton $width={14} aria-label="Recent">
          <Chevron color="#888" />
        </NavButton>
        <NavButton $width={26} aria-label="Up">
          <BackArrow up />
        </NavButton>
        <AddressBox>
          <FolderIcon />
          <Crumb $gap={6}>«</Crumb>
          {crumbs.map((c, i) => (
            <React.Fragment key={c}>
              <Crumb $gap={i === 0 ? 1 : 8}>{c}</Crumb>
              <Chevron dir="right" w={7} />
            </React.Fragment>
          ))}
          <Spacer />
          <Chevron w={10} />
          <RefreshButton aria-label="Refresh">
            <Stroke w={11} d="M9.500 3A4.300 4.300 0 1 1 4 1.500M9.500 0v3.500H6" color="#666" sw={1.500} />
          </RefreshButton>
        </AddressBox>
        <SearchBox>
          <input placeholder="Search Adobe" aria-label="Search Adobe" />
          <Stroke w={12} color="#666" sw={1.500}>
            <circle cx="7.500" cy="4.500" r="3.500" />
            <path d="M5 7l-4.500 4.500" strokeWidth="2" />
          </Stroke>
        </SearchBox>
      </AddressRow>
      <Panes>
        <Tree>
          {tree.map(([name, level]) => (
            <TreeItem key={name} $level={level} $selected={name === "Adobe"}>
              <FolderIcon />
              {name}
            </TreeItem>
          ))}
        </Tree>
        <VScroll>
          <ScrollButton aria-label="Scroll up">
            <Chevron dir="up" w={9} sw={2} />
          </ScrollButton>
          <Thumb $flex={191} $empty />
          <Thumb $flex={44} />
          <Thumb $flex={117} $empty />
          <ScrollButton aria-label="Scroll down">
            <Chevron w={9} sw={2} />
          </ScrollButton>
        </VScroll>
        <ListPane>
          <ListBody>
            <FileTable>
              <colgroup>
                <col width="258" />
                <col width="144" />
                <col width="120" />
                <col width="80" />
              </colgroup>
              <thead>
                <tr>
                  <th>
                    <div>
                      Name
                      <Chevron dir="up" w={9} sw={1} />
                    </div>
                  </th>
                  <th>Date modified</th>
                  <th>Type</th>
                  <th>Size</th>
                </tr>
              </thead>
              <tbody>
                {files.map(([name, date]) => (
                  <FileRow key={name} $hover={name === "CRLogs"}>
                    <td>
                      <FileName>
                        <FolderIcon />
                        {name}
                      </FileName>
                    </td>
                    <td>{date}</td>
                    <td>File folder</td>
                    <td></td>
                  </FileRow>
                ))}
              </tbody>
            </FileTable>
          </ListBody>
          <HScroll>
            <ScrollButton $height={15} aria-label="Scroll left">
              <Chevron dir="left" w={9} sw={2} />
            </ScrollButton>
            <Thumb $flex={1} />
            <ScrollButton $height={15} aria-label="Scroll right">
              <Chevron dir="right" w={9} sw={2} />
            </ScrollButton>
          </HScroll>
        </ListPane>
      </Panes>
      <StatusBar>
        9 items
        <Spacer />
        <ViewButton $on aria-label="Details">
          <Stroke w={16} h={13} color="#555">
            <path d="M.5 1.500h3v3h-3zM.5 5.500h3v3h-3zM.5 9.500h3v3h-3z" stroke="#a66b8a" />
            <path d="M6 3h4M12 3h4M6 7h4M12 7h4M6 11h4M12 11h4" />
          </Stroke>
        </ViewButton>
        <ViewButton aria-label="Large icons">
          <Stroke w={13} h={11} color="#888">
            <path d="M.5.500h12v10H.500z" fill="#fff" />
            <path d="M2 2h9v4H2z" fill="#9cc4f0" stroke="none" />
            <path d="M2 7l4-2 5 1v3H2z" fill="#345d8c" stroke="none" />
          </Stroke>
        </ViewButton>
      </StatusBar>
    </Window>
  );
}

function BrowserWindow() {
  return (
    <Browser>
      <TabStrip>
        <StripButton $width={44} aria-label="Profile">
          <ProfileIcon />
        </StripButton>
        <StripButton $width={33} aria-label="Tab actions">
          <Stroke w={15} h={14} color="#111" sw={1.500}>
            <rect x="1" y="1" width="13" height="12" rx="2" />
            <path d="M1 3.500h13" strokeWidth="2.500" />
            <path d="M5 3v10" />
          </Stroke>
        </StripButton>
        <BrowserTab>
          <Stroke w={13} h={16} color="#555" sw={1.200}>
            <path d="M1 1h7l4 4v10H1zM8 1v4h4" />
          </Stroke>
          <TabTitle>8642033_Denuncia_laboral_fiscal</TabTitle>
          <Stroke w={9} d="M1 1l7 7M8 1L1 8" color="#555" />
        </BrowserTab>
        <StripButton $width={35} aria-label="New tab">
          <Stroke w={13} d="M6.500 0v13M0 6.500h13" color="#333" />
        </StripButton>
        <Spacer />
        <StripButton aria-label="Minimize">
          <Stroke w={10} d="M0 5.500h10" color="#777" />
        </StripButton>
        <StripButton aria-label="Restore">
          <Stroke w={10} color="#777">
            <rect x=".5" y="2.500" width="7" height="7" rx="1" />
            <path d="M3 .5h5a1.500 1.500 0 0 1 1.500 1.500v5" />
          </Stroke>
        </StripButton>
        <StripButton aria-label="Close">
          <Stroke w={10} d="M0 0l10 10M10 0L0 10" color="#777" />
        </StripButton>
      </TabStrip>
      <Toolbar>
        <NavButton $width={46} aria-label="Back">
          <BackArrow color="#c8c8c8" size={17} />
        </NavButton>
        <NavButton $width={44} aria-label="Refresh">
          <Stroke w={17} color="#222" sw={1.500} d="M15 5.500A7 7 0 1 0 15.500 9M15.500 1v5h-5" />
        </NavButton>
        <UrlBar>
          <Stroke w={16} color="#777" sw={1.200}>
            <circle cx="8" cy="8" r="7" />
            <path d="M8 7v5M8 4v1.500" />
          </Stroke>
          File
          <input defaultValue="C:/Users/admin/" aria-label="Address" />
        </UrlBar>
        <NavButton $width={44} aria-label="Collections">
          <Stroke w={17} color="#222" sw={1.300}>
            <path d="M4 12.500C2 12 3 9 1.500 5 1 3 2 2.500 4 2l5-1c2 0 2 1 2.500 3" />
            <rect x="6" y="6" width="10" height="10" rx="2" />
            <path d="M11 8v6M8 11h6" />
          </Stroke>
        </NavButton>
        <NavButton $width={44} aria-label="Browser essentials">
          <Stroke w={18} color="#222" sw={1.300}>
            <path d="M1 7C0 1 6-1 9 4c3-5 9-3 8 3M3 10l6 6M1 8h4l2-3 2.500 6L12 7l1 1h4" />
            <circle cx="13.500" cy="13.500" r="4" fill="#1a7f22" stroke="none" />
            <path d="M11.500 13.500l1.500 1.500 2.500-3" stroke="#fff" />
          </Stroke>
        </NavButton>
        <NavButton $width={44} aria-label="Settings and more">
          <svg width="14" height="4" viewBox="0 0 14 4" fill="#222">
            <circle cx="2" cy="2" r="1.300" />
            <circle cx="7" cy="2" r="1.300" />
            <circle cx="12" cy="2" r="1.300" />
          </svg>
        </NavButton>
        <NavButton $width={42} aria-label="Copilot">
          <CopilotIcon />
        </NavButton>
      </Toolbar>
      <Page>
        <PageBody>
          <p>
            Se trata de un proceso or
            <br />
            en donde se pretende la r
            <br />
            antes posible.
          </p>
          <h2>ARCHIVO PROTE</h2>
          <Banner href="#descarga">
            <PdfPicture />
            Desc
          </Banner>
        </PageBody>
        <PageScroll>
          <svg width="10" height="6" viewBox="0 0 10 6">
            <path d="M5 0l5 6H0z" fill="#8b8b8b" />
          </svg>
          <ThumbGap />
          <PageThumb />
          <svg width="10" height="6" viewBox="0 0 10 6">
            <path d="M5 6l5-6H0z" fill="#8b8b8b" />
          </svg>
        </PageScroll>
      </Page>
    </Browser>
  );
}

export default function App() {
  return (
    <Desktop>
      <GlobalStyle />
      <BrowserWindow />
      <BackWindow />
      <FrontWindow />
      <Watermark>
        ANY
        <svg width="58" height="64" viewBox="0 0 58 64" fill="none">
          <path
            d="M17 3l37 28-37 28V17l24 14-24 14M10 8v48l7 5M4 12v38"
            stroke="#000"
            strokeOpacity=".14"
            strokeWidth="6"
          />
          <path
            d="M17 3l37 28-37 28V17l24 14-24 14M10 8v48l7 5M4 12v38"
            stroke="#fff"
            strokeWidth="4"
          />
        </svg>
        RUN
      </Watermark>
      <Taskbar>
        <TaskButton $width={48} aria-label="Start">
          <svg width="16" height="16" viewBox="0 0 16 16" fill="#fff">
            <path d="M0 2l7-1v6.500H0zM8 1l8-1v7.500H8zM0 8.500h7V15l-7-1zM8 8.500h8V16l-8-1z" />
          </svg>
        </TaskButton>
        <TaskSearch>
          <Stroke w={15} color="#222" sw={1.300}>
            <circle cx="9" cy="6" r="5" />
            <path d="M5.500 9.500L.500 14.500" />
          </Stroke>
          <input placeholder="Type here to search" aria-label="Search" />
          <BeesPicture />
        </TaskSearch>
        <TaskButton $width={51} aria-label="Task view">
          <Stroke w={17} h={16}>
            <path d="M.5 0v2.500h10V0M.5 16v-2.500h10V16M.5 4.500h10v7H.500zM14.500 0v16" />
            <path d="M13.500 5h2v3h-2z" fill="#fff" />
          </Stroke>
        </TaskButton>
        <TaskButton $running aria-label="Edge">
          <EdgeIcon />
        </TaskButton>
        <TaskButton $running $active aria-label="File Explorer">
          <ExplorerIcon />
        </TaskButton>
        <TaskButton $width={51} aria-label="Firefox">
          <FirefoxIcon />
        </TaskButton>
        <TaskButton $running aria-label="Outlook">
          <OutlookIcon />
        </TaskButton>
        <Tray>
          <TrayButton aria-label="Hidden icons">
            <Stroke w={12} h={7} d="M.5 6.500L6 1l5.500 5.500" sw={1.300} />
          </TrayButton>
          <TrayButton aria-label="Meet now">
            <Stroke w={13} h={16} sw={1.200}>
              <rect x="1" y="4.500" width="7" height="7" rx="1" />
              <path d="M8 7l3-2v6L8 9M2 2C4 0 8 0 10 2M2 14c2 2 6 2 8 0" />
            </Stroke>
          </TrayButton>
          <TrayButton aria-label="Network">
            <Stroke w={17} h={15}>
              <path d="M6 2.500h10.500v8H4.500V6M10.500 10.500v3M7 13.500h7M.5 1.500h4v4h-4zM2.500 5.500v8h2" />
            </Stroke>
          </TrayButton>
          <TrayButton aria-label="Volume">
            <Stroke w={17} h={14} d="M.5 4.500H3l4-4v13l-4-4H.500zM9 5c1 1 1 3 0 4M11.500 3c2 2 2 6 0 8M13.500 1c3 3 3 9 0 12" />
          </TrayButton>
          <Clock>
            1:21 PM
            <br />
            5/27/2025
          </Clock>
          <TrayButton $width={38} aria-label="Notifications">
            <Stroke w={17} d="M.5 1.500h16v11h-5l-3 3-3-3h-5z" sw={1.200} />
          </TrayButton>
          <ShowDesktop aria-label="Show desktop" />
        </Tray>
      </Taskbar>
    </Desktop>
  );
}
